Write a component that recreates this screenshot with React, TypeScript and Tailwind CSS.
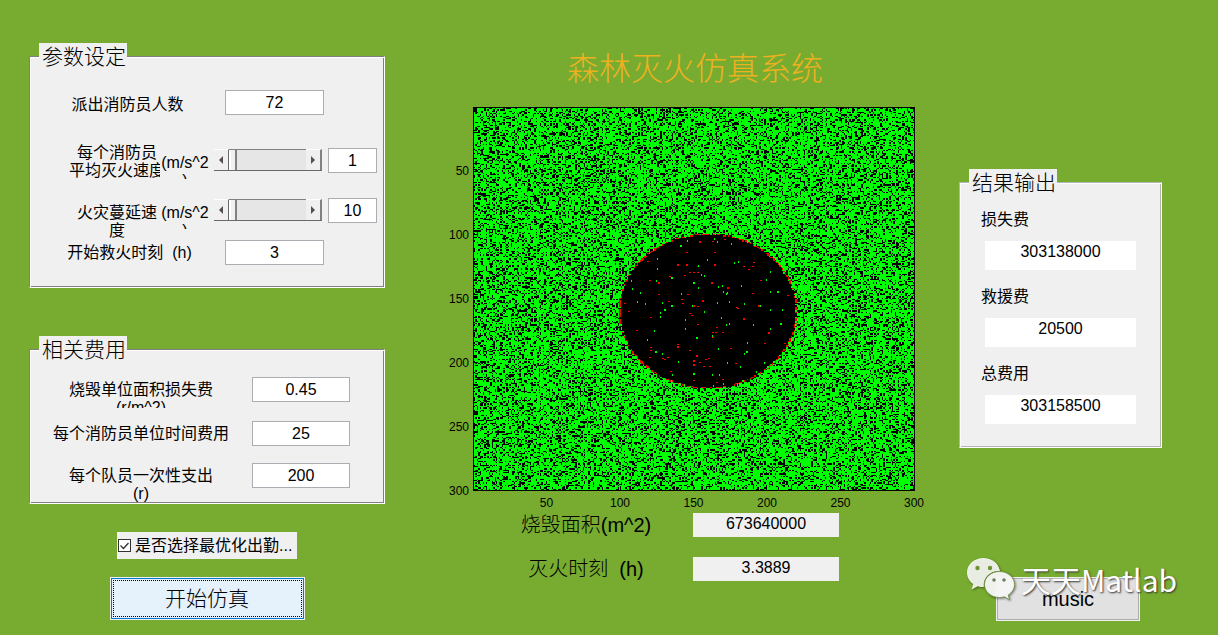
import type { ReactNode } from "react";

const SIZE = 300;
const CENTER = 159.5;
const RADIUS = 60;
const PLOT_WIDTH = 440;
const PLOT_HEIGHT = 382;
const TICKS = [50, 100, 150, 200, 250, 300];

type Point = [number, number];

// Leftover cells inside the burnt area, in thirds of a plot unit
const RED_BIG: Point[] = [
  [299, 65], [234, 134], [261, 134], [345, 134], [177, 190], [336, 188], [383, 205], [309, 242], [282, 258],
  [477, 258], [432, 298], [507, 338], [234, 380], [290, 408], [282, 423], [282, 436],
];
const RED_SMALL: Point[] = [
  [375, 58], [340, 65], [260, 98], [345, 98], [145, 124], [294, 138], [432, 138], [463, 126], [459, 138],
  [446, 147], [270, 156], [282, 156], [294, 156], [256, 165], [210, 169], [150, 181], [484, 181], [459, 220],
  [177, 222], [265, 222], [208, 243], [247, 237], [249, 250], [75, 250], [565, 225], [88, 274], [295, 258],
  [411, 261], [414, 264], [270, 280], [275, 285], [153, 292], [295, 312], [351, 322], [111, 331], [349, 338],
  [370, 338], [340, 338], [340, 353], [234, 372], [154, 381], [154, 390], [270, 391], [393, 384], [495, 370],
  [556, 370], [151, 412], [190, 415], [195, 418], [204, 412], [326, 415], [318, 418], [300, 427], [408, 430],
  [313, 439], [331, 439], [213, 454], [282, 481], [370, 477], [495, 427], [351, 488],
];
const GREEN_BIG: Point[] = [
  [243, 78], [216, 174], [282, 189], [534, 215], [216, 258], [195, 269], [543, 313], [291, 353], [168, 396],
  [441, 396], [282, 462], [477, 462],
];
const GREEN_SMALL: Point[] = [
  [261, 62], [393, 73], [351, 65], [256, 50], [344, 57], [172, 118], [172, 147], [322, 120], [295, 138],
  [415, 125], [402, 130], [304, 165], [313, 168], [511, 156], [93, 184], [168, 182], [98, 208], [295, 204],
  [366, 198], [424, 198], [355, 200], [500, 181], [120, 220], [243, 223], [370, 217], [383, 220], [378, 223],
  [511, 215], [111, 247], [135, 253], [186, 248], [277, 258], [352, 250], [388, 246], [181, 280], [181, 290],
  [313, 277], [256, 299], [365, 295], [432, 253], [481, 258], [511, 269], [547, 269], [388, 312], [379, 315],
  [459, 316], [511, 327], [256, 327], [163, 334], [336, 349], [141, 361], [441, 370], [355, 387], [432, 403],
  [186, 403], [234, 427], [492, 430], [381, 430], [420, 442], [336, 466], [357, 466], [216, 466], [468, 457],
  [370, 492], [340, 499],
];

const plotX = (cell: number) => Math.round((cell * PLOT_WIDTH) / SIZE);
const plotY = (cell: number) => Math.round((cell * PLOT_HEIGHT) / SIZE);

function box(left: number, top: number, right: number, bottom: number) {
  return `M${left} ${top}H${right}V${bottom}H${left}z`;
}

function dots(points: Point[], w: number, h: number) {
  return points
    .map(([x, y]) => {
      const left = Math.round(126 + x / 3 - w / 2);
      const top = Math.round(112 + y / 3 - h / 2);
      return box(left, top, left + w, top + h);
    })
    .join("");
}

function createRandom(seed: number) {
  let a = seed;
  return () => {
    a = (a + 0x6d2b79f5) | 0;
    let t = Math.imul(a ^ (a >>> 15), 1 | a);
    t = (t + Math.imul(t ^ (t >>> 7), 61 | t)) ^ t;
    return ((t ^ (t >>> 14)) >>> 0) / 4294967296;
  };
}

function buildForest() {
  const random = createRandom(7);
  let empty = "";
  let fire = "";
  for (let y = 0; y < SIZE; y++) {
    let start = -1;
    for (let x = 0; x <= SIZE; x++) {
      const r = random();
      const d = Math.hypot(x + 0.5 - CENTER, y + 0.5 - CENTER);
      const black = x < SIZE && (d < RADIUS || r < 0.29);
      if (black) {
        if (start < 0) start = x;
        continue;
      }
      if (start >= 0) {
        empty += box(plotX(start), plotY(y), plotX(x), plotY(y + 1));
        start = -1;
      }
      if (d < RADIUS + 1 && r > 0.45) {
        fire += box(plotX(x), plotY(y), plotX(x + 1), plotY(y + 1));
      }
    }
  }
  return { empty, fire };
}

const forest = buildForest();

function ForestPlot() {
  return (
    <svg
      viewBox="0 0 440 382"
      preserveAspectRatio="none"
      shapeRendering="crispEdges"
      className="block h-[384px] w-full border border-black"
    >
      <rect width="440" height="382" fill="#00ff00" />
      <path d={forest.empty} fill="#000" />
      <path d={forest.fire} fill="#f00" />
      <path d={dots(RED_BIG, 2, 2)} fill="#f00" />
      <path d={dots(RED_SMALL, 2, 1)} fill="#f00" />
      <path d={dots(GREEN_BIG, 2, 2)} fill="#0f0" />
      <path d={dots(GREEN_SMALL, 1, 2)} fill="#0f0" />
      {TICKS.map((t) => (
        <path
          key={t}
          d={
            box(0, plotY(t) - 1, 4, plotY(t)) +
            box(436, plotY(t) - 1, 440, plotY(t)) +
            box(plotX(t) - 1, 0, plotX(t), 4) +
            box(plotX(t) - 1, 378, plotX(t), 382)
          }
        />
      ))}
    </svg>
  );
}

function Panel({ title, edge, children }: { title: string; edge: string; children: ReactNode }) {
  return (
    <fieldset className={`min-w-0 border border-r-white border-b-white bg-[#f0f0f0] ${edge}`}>
      <legend className="ml-[9px] bg-[#f0f0f0] pl-[3px] pr-px text-[21px] leading-[27px] font-light">{title}</legend>
      {children}
    </fieldset>
  );
}

const DARK_EDGE = "border-t-[#808080] border-l-[#808080] shadow-[inset_1px_1px_#fff,inset_-1px_-1px_#808080]";
const SOFT_EDGE = "border-t-[#b4b4b4] border-l-[#b4b4b4] shadow-[inset_1px_1px_#fff,inset_-1px_-1px_#b4b4b4]";

function NumberBox({ id, value, className }: { id: string; value: string; className: string }) {
  return (
    <input
      id={id}
      defaultValue={value}
      className={`h-[25px] shrink-0 border border-[#abadb3] bg-white text-center outline-none ${className}`}
    />
  );
}

function SpeedRow({ id, label, value, slider }: { id: string; label: ReactNode; value: string; slider: number }) {
  return (
    <div className="flex items-start pr-[7px] pl-[39px]">
      <label htmlFor={id} className="flex shrink-0">
        <span className="w-[91px] overflow-hidden">
          <span className="block w-24 text-center whitespace-nowrap">{label}</span>
        </span>
        <span className="mt-[10px] h-[25px] w-[50px] overflow-hidden text-center whitespace-nowrap">
          (m/s^2
          <br />)
        </span>
      </label>
      <div className="mt-[5px] mr-[6px] ml-[4px] flex h-[22px] min-w-0 flex-1 border-b border-[#696969]">
        <button
          type="button"
          aria-label="减小"
          className="flex w-[15px] shrink-0 items-center justify-center border-t border-r border-t-white border-r-[#696969]"
        >
          <svg viewBox="0 0 4 8" className="h-[8px] w-[4px]">
            <path d="M4 0v8L0 4z" fill="#505050" />
          </svg>
        </button>
        <input
          type="range"
          aria-label="速度"
          min="0"
          max="100"
          defaultValue={slider}
          className="h-full min-w-0 flex-1 appearance-none border-t border-[#808080] bg-[#e6e6e6] [&::-webkit-slider-thumb]:h-[20px] [&::-webkit-slider-thumb]:w-[8px] [&::-webkit-slider-thumb]:appearance-none [&::-webkit-slider-thumb]:border-r-2 [&::-webkit-slider-thumb]:border-l-2 [&::-webkit-slider-thumb]:border-r-[#808080] [&::-webkit-slider-thumb]:border-l-white [&::-webkit-slider-thumb]:bg-[#f0f0f0]"
        />
        <button
          type="button"
          aria-label="增大"
          className="flex w-[16px] shrink-0 items-center justify-center border-t border-r-2 border-t-white border-r-[#808080]"
        >
          <svg viewBox="0 0 4 8" className="h-[8px] w-[4px]">
            <path d="M0 0v8l4-4z" fill="#505050" />
          </svg>
        </button>
      </div>
      <NumberBox id={id} value={value} className="mt-1 w-[49px]" />
    </div>
  );
}

function CostRow({ id, label, value, clip }: { id: string; label: ReactNode; value: string; clip: string }) {
  return (
    <div className="flex items-start pr-[34px]">
      <label htmlFor={id} className={`mt-1 flex-1 overflow-hidden text-center ${clip}`}>
        {label}
      </label>
      <NumberBox id={id} value={value} className="w-[98px]" />
    </div>
  );
}

function ResultField({ id, label, value }: { id: string; label: string; value: string }) {
  return (
    <div className="flex flex-col gap-3">
      <label htmlFor={id} className="pl-[21px]">
        {label}
      </label>
      <output id={id} className="mr-[25px] ml-[25px] block h-[29px] bg-white pt-[2px] text-center">
        {value}
      </output>
    </div>
  );
}

function PlotOutput({ id, label, value }: { id: string; label: string; value: string }) {
  return (
    <div className="flex items-center justify-center pl-1">
      <label htmlFor={id} className="w-[154px] text-center text-[20px] leading-6 font-light whitespace-pre">
        {label}
      </label>
      <output id={id} className="ml-[30px] block h-6 w-[146px] bg-[#f0f0f0] pt-[2px] text-center">
        {value}
      </output>
    </div>
  );
}

function Watermark() {
  return (
    <div className="pointer-events-none absolute -top-5 -left-[30px] flex items-center">
      <svg viewBox="0 0 50 44" className="h-[44px] w-[50px] drop-shadow-[1px_1px_1px_rgba(0,0,0,0.5)]">
        <path
          d="M17.500 1C8 1 1 7.500 1 15.500c0 4.800 2.400 8.800 6.300 11.500L5.500 32.500l6.300-3.200c2 .6 4 .8 6 .8C17 19.500 25 13.500 34 14 32.500 6 25.500 1 17.500 1z"
          fill="#fff"
          fillOpacity=".88"
        />
        <path
          d="M33.500 14.500C25 14.500 18.500 20.500 18.500 27.500S25 40.500 33.500 40.500c1.800 0 3.500-.3 5-.8l5 3-1.300-4.700c3.800-2.500 6.300-6.100 6.300-10.500 0-7-6.500-13-15-13z"
          fill="#fff"
          fillOpacity=".92"
          stroke="#6f8f3d"
          strokeWidth=".8"
        />
        <circle cx="11.500" cy="11" r="2.200" fill="#6f9434" />
        <circle cx="24" cy="11" r="2.200" fill="#6f9434" />
        <circle cx="28" cy="23" r="1.800" fill="#6f8060" />
        <circle cx="38" cy="23" r="1.800" fill="#6f8060" />
      </svg>
      <span className="ml-[5px] font-['Noto_Sans_CJK_SC',sans-serif] text-[30px] leading-[44px] whitespace-nowrap text-white [text-shadow:1px_1px_2px_#333]">
        天天Matlab
      </span>
    </div>
  );
}

export default function App() {
  return (
    <main className="grid min-h-screen grid-cols-[356fr_486fr_203fr] items-start gap-x-11 overflow-hidden bg-[#77ac30] pr-[56px] pb-3 pl-[29px] font-['Liberation_Sans','Noto_Sans_CJK_SC',sans-serif] text-[16px] leading-[18px] text-black">
      <form className="flex min-w-0 flex-col pt-[43px]">
        <Panel title="参数设定" edge={DARK_EDGE}>
          <div className="flex flex-col pt-5 pb-[22px]">
            <div className="mb-[29px] flex items-center pr-[60px]">
              <label htmlFor="people" className="mt-1 flex-1 text-center">
                派出消防员人数
              </label>
              <NumberBox id="people" value="72" className="w-[99px]" />
            </div>
            <div className="h-[50px]">
              <SpeedRow
                id="put-out"
                slider={0}
                value="1"
                label={
                  <>
                    每个消防员
                    <br />
                    平均灭火速度
                  </>
                }
              />
            </div>
            <div className="h-[46px]">
              <SpeedRow
                id="spread"
                slider={0}
                value="10"
                label={
                  <span className="block pt-[10px]">
                    火灾蔓延速
                    <br />度
                  </span>
                }
              />
            </div>
            <div className="flex items-center pr-[60px]">
              <label htmlFor="start" className="flex-1 pl-1 text-center whitespace-pre">
                {"开始救火时刻  (h)"}
              </label>
              <NumberBox id="start" value="3" className="w-[99px]" />
            </div>
          </div>
        </Panel>

        <div className="mt-12">
          <Panel title="相关费用" edge={DARK_EDGE}>
            <div className="grid grid-rows-[44px_42px_40px] pt-[14px]">
              <CostRow
                id="loss-unit"
                value="0.45"
                clip="h-[27px]"
                label={
                  <>
                    烧毁单位面积损失费
                    <br />
                    (r/m^2)
                  </>
                }
              />
              <CostRow id="time-unit" value="25" clip="h-[27px]" label="每个消防员单位时间费用" />
              <CostRow
                id="one-off"
                value="200"
                clip="h-[36px]"
                label={
                  <>
                    每个队员一次性支出
                    <br />
                    (r)
                  </>
                }
              />
            </div>
          </Panel>
        </div>

        <label className="relative mt-7 flex h-[27px] w-[180px] items-center gap-1 self-center bg-[#f0f0f0] pl-px whitespace-nowrap">
          <input type="checkbox" defaultChecked className="peer sr-only" />
          <svg
            viewBox="0 0 13 13"
            className="h-[13px] w-[13px] shrink-0 bg-white [&>path]:invisible peer-checked:[&>path]:visible"
          >
            <rect x=".5" y=".5" width="12" height="12" fill="none" stroke="#333" />
            <path d="M2.500 6.500l3 3 5-5.500" fill="none" stroke="#333" strokeWidth="1.300" />
          </svg>
          是否选择最优化出勤...
        </label>
        <button
          type="button"
          className="mt-[18px] h-[43px] w-[195px] self-center border border-[#f0f0f0] bg-[#e5f1fb] p-[2px] text-[21px] font-light shadow-[inset_0_0_0_1px_#0078d7]"
        >
          <span className="flex h-full items-center justify-center border border-dotted border-black">开始仿真</span>
        </button>
      </form>

      <section className="min-w-0 pt-[45px]">
        <h1 className="pl-[46px] text-center text-[32px] leading-[48px] font-light text-[#edb120]">森林灭火仿真系统</h1>
        <div className="mt-[14px] grid grid-cols-[44px_1fr] text-[12px]">
          <div className="flex flex-col pr-1">
            {TICKS.map((t) => (
              <span key={t} className="flex flex-1 items-end justify-end">
                <span className="h-0 leading-[0px]">{t}</span>
              </span>
            ))}
          </div>
          <ForestPlot />
          <div className="col-start-2 flex h-[22px] pt-[3px] pr-px">
            {TICKS.map((t) => (
              <span key={t} className="flex flex-1 justify-end">
                <span className="flex w-0 justify-center">{t}</span>
              </span>
            ))}
          </div>
        </div>
        <div className="flex flex-col gap-5">
          <PlotOutput id="burnt-area" label="烧毁面积(m^2)" value="673640000" />
          <PlotOutput id="out-time" label="灭火时刻  (h)" value="3.3889" />
        </div>
      </section>

      <section className="min-w-0 pt-[169px]">
        <Panel title="结果输出" edge={SOFT_EDGE}>
          <div className="flex flex-col gap-[18px] pt-[15px] pb-[23px]">
            <ResultField id="loss" label="损失费" value="303138000" />
            <ResultField id="rescue" label="救援费" value="20500" />
            <ResultField id="total" label="总费用" value="303158500" />
          </div>
        </Panel>
        <div className="relative mt-[129px] mr-[22px] ml-[37px]">
          <button
            type="button"
            className="block h-[44px] w-full border border-[#f0f0f0] bg-[#e1e1e1] text-[20px] shadow-[inset_0_0_0_1px_#adadad]"
          >
            music
          </button>
          <Watermark />
        </div>
      </section>
    </main>
  );
}
